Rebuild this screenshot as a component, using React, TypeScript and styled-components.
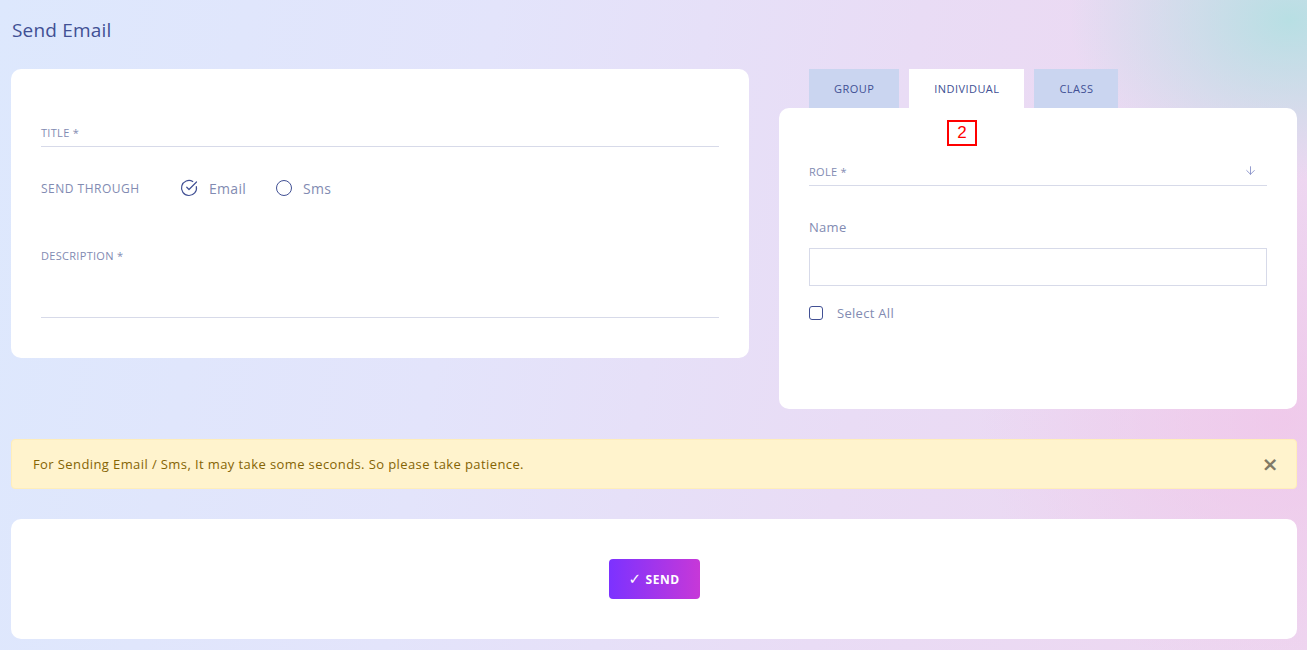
import React from "react";
import styled, { createGlobalStyle } from "styled-components";
import { ArrowDown, CircleCheckBig } from "lucide-react";

const GlobalStyle = createGlobalStyle`
  * { box-sizing: border-box; }
  html, body { margin: 0; padding: 0; }
  body {
    font-family: "Open Sans", "Liberation Sans", sans-serif;
    color: #415094;
    min-height: 650px;
    background:
      radial-gradient(ellipse 220px 160px at 1290px 20px, rgba(178, 224, 226, 0.9), rgba(178, 224, 226, 0) 100%),
      radial-gradient(ellipse 300px 260px at 1280px 420px, rgba(240, 196, 232, 0.7), rgba(240, 196, 232, 0) 100%),
      linear-gradient(100deg, #dde8fd 0%, #e3e4fb 35%, #e9dcf5 65%, #eed6f0 100%);
  }
`;

const Page = styled.div`
  padding: 18px 10px 12px 11px;
`;

const PageTitle = styled.h1`
  margin: 0 0 27px 1px;
  font-size: 19px;
  line-height: 24px;
  font-weight: 500;
  letter-spacing: 0.2px;
  color: #415094;
`;

const TopGrid = styled.div`
  display: grid;
  grid-template-columns: 738px 1fr;
  column-gap: 30px;
  align-items: start;
`;

const Card = styled.section`
  background: #fff;
  border-radius: 10px;
`;

const FormCard = styled(Card)`
  padding: 50px 30px 40px;
`;

const Label = styled.label`
  display: block;
  font-size: 11px;
  line-height: 14px;
  letter-spacing: 0.3px;
  color: #828bb2;
  text-transform: uppercase;
`;

const LineField = styled.div<{ height?: number }>`
  position: relative;
  display: flex;
  align-items: flex-end;
  justify-content: space-between;
  height: ${({ height }) => height ?? 28}px;
  padding-bottom: 6px;
  border-bottom: 1px solid #d7dae9;
`;

const AreaField = styled.div`
  margin-top: 50px;
  height: 69px;
  border-bottom: 1px solid #d7dae9;
`;

const ThroughRow = styled.div`
  display: flex;
  align-items: center;
  height: 22px;
  margin-top: 30px;
`;

const ThroughLabel = styled.span`
  width: 139px;
  font-size: 12px;
  letter-spacing: 0.5px;
  color: #828bb2;
  text-transform: uppercase;
`;

const Option = styled.span`
  display: inline-flex;
  align-items: center;
  gap: 11px;
  margin-right: 30px;
  font-size: 14px;
  letter-spacing: 0.3px;
  color: #828bb2;
`;

const Radio = styled.span`
  width: 16px;
  height: 16px;
  border: 1px solid #415094;
  border-radius: 50%;
`;

const RightCol = styled.div`
  display: flex;
  flex-direction: column;
`;

const Tabs = styled.div`
  display: flex;
  gap: 10px;
  padding-left: 30px;
`;

const Tab = styled.div<{ active?: boolean }>`
  height: 39px;
  padding: 0 25px;
  display: flex;
  align-items: center;
  font-size: 11px;
  font-weight: 500;
  letter-spacing: 0.45px;
  text-transform: uppercase;
  color: #415094;
  background: ${({ active }) => (active ? "#fff" : "#cad5f0")};
`;

const SelectCard = styled(Card)`
  position: relative;
  height: 301px;
  padding: 50px 30px 0;
`;

const Marker = styled.span`
  position: absolute;
  left: 168px;
  top: 12px;
  width: 30px;
  height: 26px;
  border: 2px solid #ff0000;
  color: #ff0000;
  font-family: "Liberation Sans", Arial, sans-serif;
  font-size: 17px;
  line-height: 22px;
  text-align: center;
`;

const NameLabel = styled.div`
  margin-top: 34px;
  font-size: 13px;
  line-height: 14px;
  letter-spacing: 0.3px;
  color: #828bb2;
`;

const TextBox = styled.div`
  margin-top: 14px;
  height: 38px;
  border: 1px solid #d7dae9;
`;

const CheckRow = styled.div`
  display: flex;
  align-items: center;
  gap: 14px;
  margin-top: 18px;
  font-size: 13px;
  letter-spacing: 0.3px;
  color: #828bb2;
`;

const Box = styled.span`
  width: 14px;
  height: 14px;
  border: 1.5px solid #415094;
  border-radius: 3px;
`;

const Alert = styled.div`
  display: flex;
  align-items: center;
  justify-content: space-between;
  height: 50px;
  margin-top: 30px;
  padding: 0 17px 0 21px;
  background: #fff3cd;
  border: 1px solid #ffeeba;
  border-radius: 4px;
  color: #856404;
  font-size: 13px;
  letter-spacing: 0.4px;
`;

const Close = styled.span`
  font-family: "DejaVu Sans", sans-serif;
  font-size: 20px;
  font-weight: bold;
  color: #807a67;
`;

const ActionCard = styled(Card)`
  margin-top: 30px;
  padding: 40px 0;
  display: flex;
  justify-content: center;
`;

const SendButton = styled.button`
  width: 91px;
  height: 40px;
  border: 0;
  border-radius: 4px;
  background: linear-gradient(90deg, #7c32ff 0%, #c738d8 100%);
  color: #fff;
  font-family: "Open Sans", "Liberation Sans", sans-serif;
  font-size: 12px;
  font-weight: 700;
  letter-spacing: 0.5px;
  text-transform: uppercase;
  display: inline-flex;
  align-items: center;
  justify-content: center;
  gap: 4px;
  cursor: pointer;
`;

const Tick = styled.span`
  font-family: "DejaVu Sans", sans-serif;
  font-size: 15px;
  font-weight: 700;
`;

const App: React.FC = () => {
  return (
    <Page>
      <GlobalStyle />
      <PageTitle>Send Email</PageTitle>
      <TopGrid>
        <FormCard>
          <LineField>
            <Label>Title *</Label>
          </LineField>
          <ThroughRow>
            <ThroughLabel>Send Through</ThroughLabel>
            <Option>
              <CircleCheckBig size={18} color="#415094" strokeWidth={1.6} />
              Email
            </Option>
            <Option>
              <Radio />
              Sms
            </Option>
          </ThroughRow>
          <AreaField>
            <Label>Description *</Label>
          </AreaField>
        </FormCard>

        <RightCol>
          <Tabs>
            <Tab>Group</Tab>
            <Tab active>Individual</Tab>
            <Tab>Class</Tab>
          </Tabs>
          <SelectCard>
            <Marker>2</Marker>
            <LineField>
              <Label>Role *</Label>
              <ArrowDown size={13} color="#7c86c4" strokeWidth={1.5} style={{ marginRight: 10, marginBottom: 2 }} />
            </LineField>
            <NameLabel>Name</NameLabel>
            <TextBox />
            <CheckRow>
              <Box />
              Select All
            </CheckRow>
          </SelectCard>
        </RightCol>
      </TopGrid>

      <Alert>
        For Sending Email / Sms, It may take some seconds. So please take patience.
        <Close>×</Close>
      </Alert>

      <ActionCard>
        <SendButton>
          <Tick>✓</Tick> Send
        </SendButton>
      </ActionCard>
    </Page>
  );
};

export default App;
